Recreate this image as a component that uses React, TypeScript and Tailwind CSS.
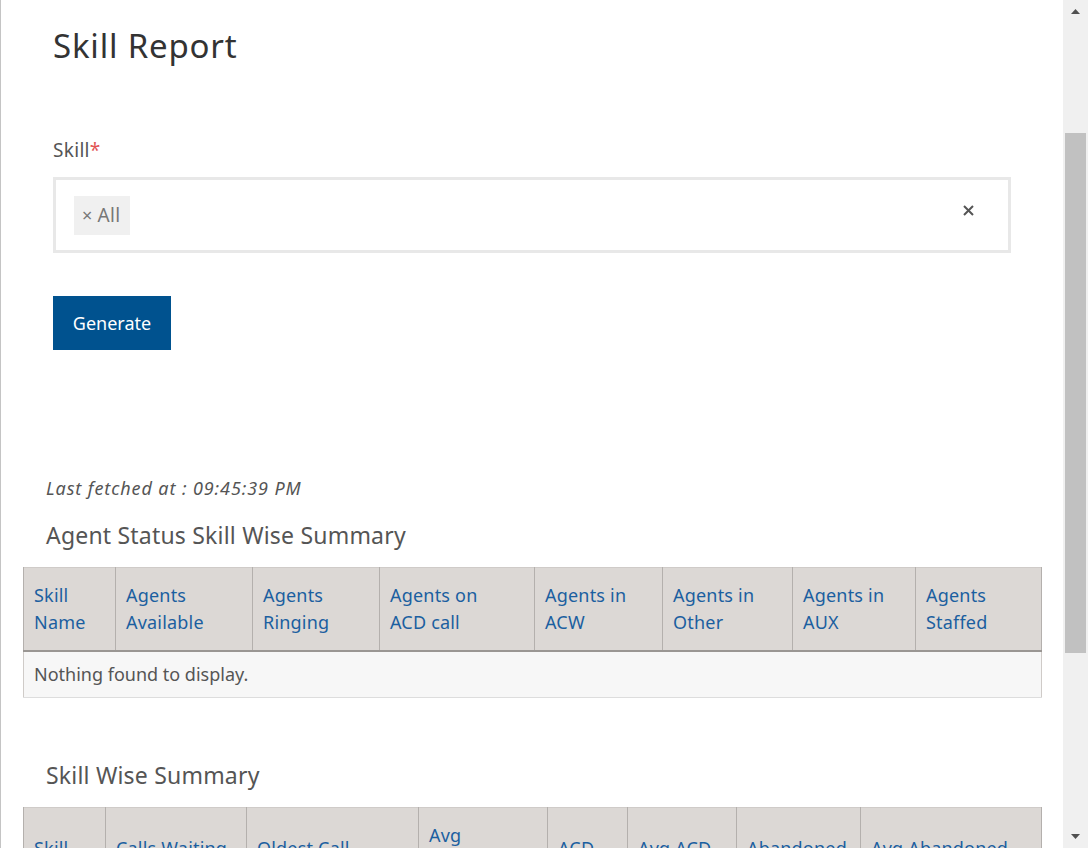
import React from "react";

const font = { fontFamily: '"Noto Sans", "Open Sans", sans-serif' };

function HeaderTable({ cols, emptyRow }: { cols: { label: React.ReactNode; w: number }[]; emptyRow?: boolean }) {
  return (
    <table className="border-collapse table-fixed w-[1018px] border border-[#cfcbc8]">
      <colgroup>
        {cols.map((c, i) => (
          <col key={i} style={{ width: c.w }} />
        ))}
      </colgroup>
      <thead>
        <tr className="bg-[#dcd8d5]">
          {cols.map((c, i) => (
            <th
              key={i}
              className="text-left font-normal align-middle text-[18px] leading-[27px] tracking-[0.2px] text-[#1b5fa0] px-[10px] py-[14px] border-l border-r border-[#b4b0ad] border-b-2 border-b-[#9a9693]"
            >
              {c.label}
            </th>
          ))}
        </tr>
      </thead>
      {emptyRow && (
        <tbody>
          <tr className="bg-[#f7f7f7]">
            <td colSpan={cols.length} className="px-[10px] h-[46px] text-[18px] text-[#555555] border-b border-[#dddddd]">
              Nothing found to display.
            </td>
          </tr>
        </tbody>
      )}
    </table>
  );
}

export default function App() {
  const t1 = [
    { label: <>Skill<br />Name</>, w: 92 },
    { label: <>Agents<br />Available</>, w: 137 },
    { label: <>Agents<br />Ringing</>, w: 127 },
    { label: <>Agents on<br />ACD call</>, w: 155 },
    { label: <>Agents in<br />ACW</>, w: 128 },
    { label: <>Agents in<br />Other</>, w: 130 },
    { label: <>Agents in<br />AUX</>, w: 123 },
    { label: <>Agents<br />Staffed</>, w: 126 },
  ];
  const t2 = [
    { label: <>Skill<br />Name</>, w: 82 },
    { label: <>Calls Waiting<br />&nbsp;</>, w: 141 },
    { label: <>Oldest Call<br />Waiting</>, w: 172 },
    { label: <>Avg<br />Speed of<br />Answer</>, w: 129 },
    { label: <>ACD<br />Calls</>, w: 80 },
    { label: <>Avg ACD<br />Time</>, w: 109 },
    { label: <>Abandoned<br />Calls</>, w: 124 },
    { label: <>Avg Abandoned<br />Time</>, w: 181 },
  ];
  return (
    <div className="h-[848px] w-[1088px] overflow-hidden flex bg-white" style={font}>
      <div className="flex-1 border-l border-[#c4c4c4] overflow-hidden">
        <div className="pl-[52px] pr-[52px]">
          <h1 className="pt-[24px] text-[33px] leading-[44px] tracking-[0.8px] text-[#333333] font-normal">Skill Report</h1>
          <div className="mt-[69px] text-[19px] leading-[26px] tracking-[0.3px] text-[#555555]">
            Skill<span className="text-[#e25555]">*</span>
          </div>
          <div className="mt-[14px] h-[76px] w-[958px] border-[3px] border-[#e8e8e8] flex items-center pl-[18px] pr-[34px]">
            <div className="bg-[#f0f0f0] h-[39px] pl-[8px] pr-[10px] flex items-center text-[19px] tracking-[0.3px] text-[#777777]">
              <span className="mr-[5px] text-[18px]">×</span>All
            </div>
            <div className="flex-1" />
            <svg width="11" height="11" viewBox="0 0 11 11" className="-mt-[10px]">
              <path d="M1 1 L10 10 M10 1 L1 10" stroke="#555" strokeWidth="2" />
            </svg>
          </div>
          <button className="mt-[43px] h-[54px] w-[118px] bg-[#00528f] text-white text-[18px]">Generate</button>
        </div>
        <div className="pl-[22px] mt-[126px]">
          <div className="pl-[23px] italic text-[18px] leading-[24px] tracking-[0.9px] text-[#555555]">Last fetched at : 09:45:39 PM</div>
          <div className="pl-[23px] mt-[19px] text-[23px] leading-[32px] tracking-[0.2px] text-[#555555]">Agent Status Skill Wise Summary</div>
          <div className="mt-[16px]">
            <HeaderTable cols={t1} emptyRow />
          </div>
          <div className="pl-[23px] mt-[61px] text-[23px] leading-[32px] tracking-[0.2px] text-[#555555]">Skill Wise Summary</div>
          <div className="mt-[16px]">
            <HeaderTable cols={t2} />
          </div>
        </div>
      </div>
      <div className="w-[25px] bg-[#f0f0f0] flex flex-col items-center">
        <svg width="9" height="5" viewBox="0 0 9 5" className="mt-[9px]">
          <path d="M0 5 L4.5 0 L9 5 Z" fill="#505050" />
        </svg>
        <div className="mt-[119px] w-[21px] h-[520px] bg-[#c1c1c1]" />
        <div className="flex-1" />
        <svg width="9" height="5" viewBox="0 0 9 5" className="mb-[9px]">
          <path d="M0 0 L4.5 5 L9 0 Z" fill="#505050" />
        </svg>
      </div>
    </div>
  );
}
